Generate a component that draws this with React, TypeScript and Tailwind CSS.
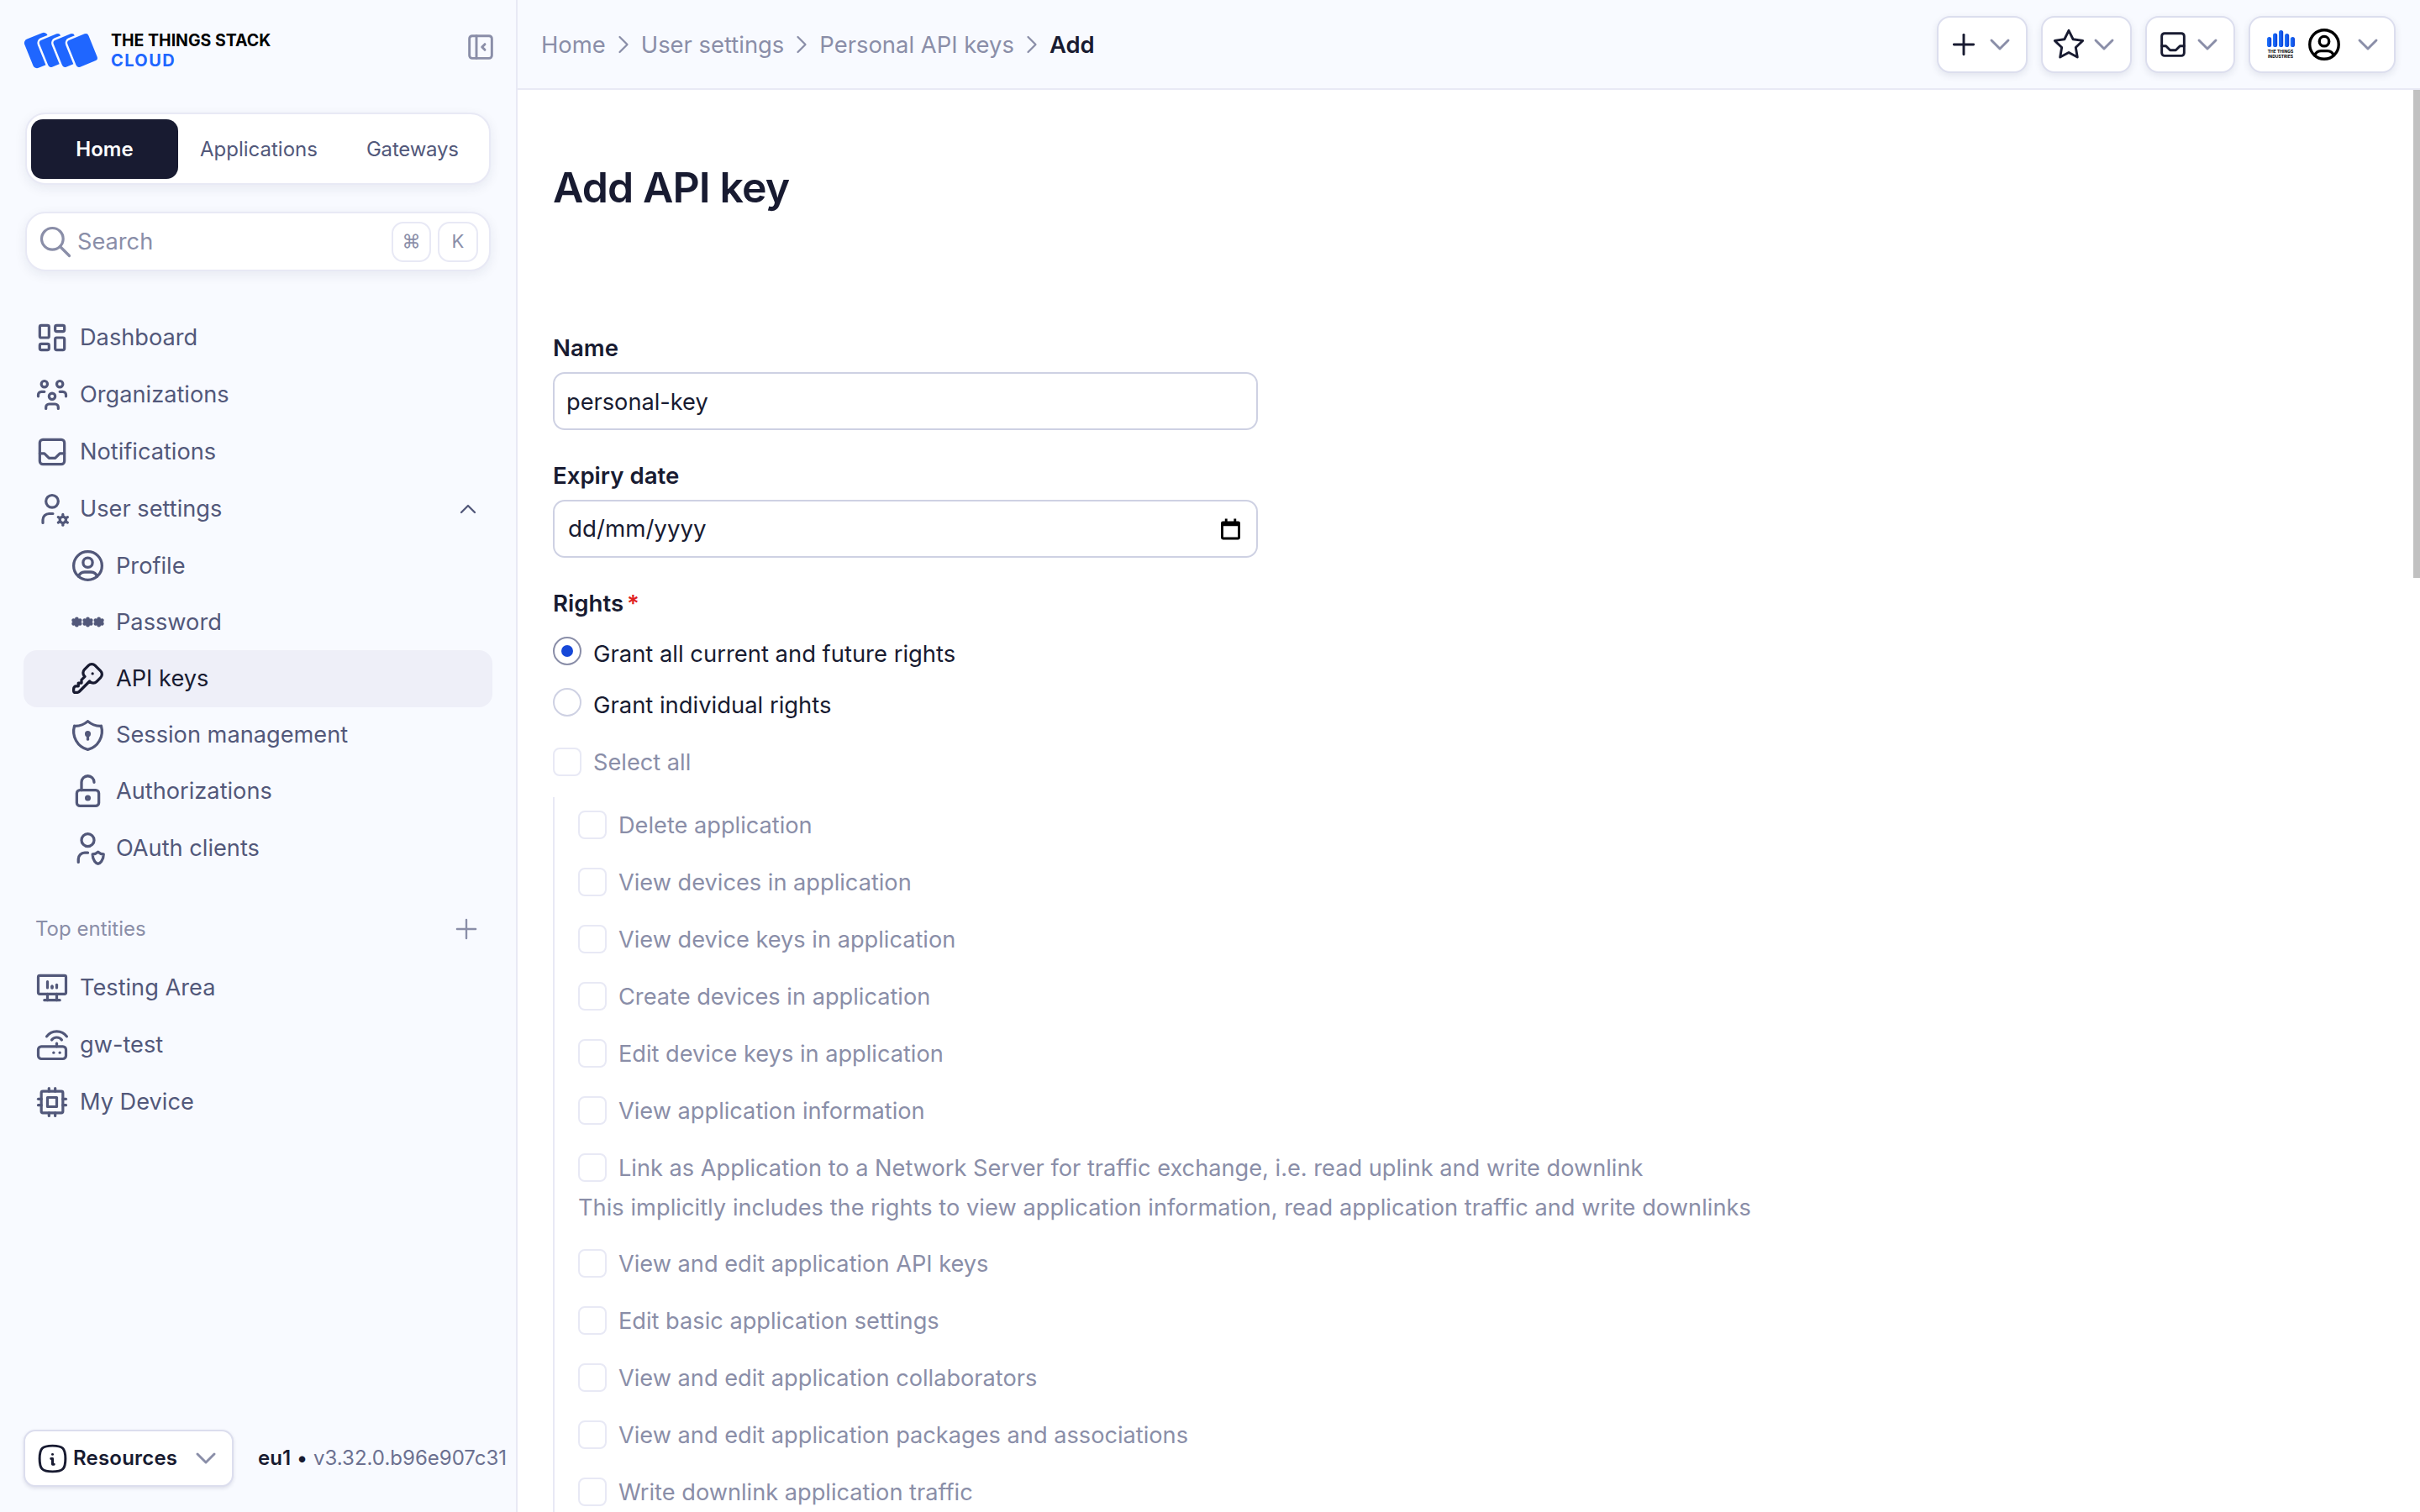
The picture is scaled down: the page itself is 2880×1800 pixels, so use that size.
import React from "react";
import {
  TbLayoutDashboard, TbUsersGroup, TbInbox, TbUserCog, TbChevronUp, TbUserCircle, TbPassword, TbKey,
  TbShieldLock, TbLockOpen, TbUserShield, TbPlus, TbDeviceDesktopAnalytics, TbRouter, TbCpu,
  TbInfoSquareRounded, TbChevronDown, TbSearch, TbLayoutSidebarLeftCollapse, TbChevronRight, TbStar,
} from "react-icons/tb";

function NavRow({ icon: Icon, label, trailing }: { icon: any; label: string; trailing?: React.ReactNode }) {
  return (
    <div className="flex h-[68px] items-center pl-[12px] pr-[6px] text-[27.2px] text-[#52587a]">
      <Icon size={44} strokeWidth={1.75} className="mr-[11px] shrink-0" />
      <span className="pt-[1px]">{label}</span>
      {trailing}
    </div>
  );
}

function SubRow({ icon: Icon, label, active, stroke = 1.75 }: { icon: any; label: string; active?: boolean; stroke?: number }) {
  return (
    <div className={`flex h-[67.2px] items-center rounded-[16px] pl-[54px] text-[27.2px] ${active ? "bg-[#eeeff8] text-[#181b31]" : "text-[#52587a]"}`}>
      <Icon size={45} strokeWidth={stroke} className="mr-[11px] shrink-0" />
      <span className="pt-[1px]">{label}</span>
    </div>
  );
}

function Logo() {
  return (
    <svg width="92" height="46" viewBox="0 0 92 46" className="shrink-0">
      {[20, 36.7, 53.4, 70].map((c, i) => (
        <rect key={c} x={c - 14.75} y="4.5" width="29.5" height="37" rx="5" fill="#1f66ff" stroke="#f8faff" strokeWidth={i === 0 ? 0 : 2.5} transform={`rotate(-22 ${c} 23)`} />
      ))}
    </svg>
  );
}

function Sidebar() {
  return (
    <aside className="flex h-full w-[616px] shrink-0 flex-col border-r-2 border-[#e8e9f5] bg-[#f8faff] pl-[28px] pr-[24px]">
      <div className="flex h-[134px] items-start justify-between pt-[36px]">
        <div className="flex items-center gap-[12px]">
          <Logo />
          <div className="font-bold leading-[24px]">
            <div className="text-[19.5px] tracking-[0px] text-black">THE THINGS STACK</div>
            <div className="text-[20px] tracking-[1.4px] text-[#1f66ff]">CLOUD</div>
          </div>
        </div>
        <TbLayoutSidebarLeftCollapse size={40} strokeWidth={1.75} className="mr-[-2px] text-[#8a8ea8]" />
      </div>

      <div className="ml-[2px] mr-[6px] flex h-[86px] items-center rounded-[24px] border-2 border-[#e8e9f5] bg-white pl-[5px] text-[24px] text-[#52587a] shadow-[0_4px_14px_rgba(30,35,80,0.08)]">
        <div className="flex h-[71px] w-[175px] items-center justify-center rounded-[14px] bg-[#181b31] pt-[1px] font-semibold text-white">Home</div>
        <span className="ml-[26px] pt-[1px]">Applications</span>
        <span className="ml-[58px] pt-[1px] tracking-[-0.2px]">Gateways</span>
      </div>

      <div className="ml-[2px] mr-[6px] mt-[32px] flex h-[71px] items-center rounded-[24px] border-2 border-[#e8e9f5] bg-white pl-[12px] pr-[13px] text-[27.2px] text-[#8a8ea8] shadow-[0_4px_14px_rgba(30,35,80,0.08)]">
        <TbSearch size={44} strokeWidth={1.75} />
        <span className="ml-[4px] pt-[2px]">Search</span>
        <span className="ml-auto flex h-[48px] w-[47px] items-center justify-center rounded-[14px] border-2 border-[#e8e9f5] text-[22px]">⌘</span>
        <span className="ml-[8px] flex h-[48px] w-[48px] items-center justify-center rounded-[14px] border-2 border-[#e8e9f5] text-[22px]">K</span>
      </div>

      <nav className="mr-[4px] mt-[45px]">
        <NavRow icon={TbLayoutDashboard} label="Dashboard" />
        <NavRow icon={TbUsersGroup} label="Organizations" />
        <NavRow icon={TbInbox} label="Notifications" />
        <NavRow icon={TbUserCog} label="User settings" trailing={<TbChevronUp size={32} strokeWidth={1.75} className="ml-auto mr-[7px]" />} />
        <SubRow icon={TbUserCircle} label="Profile" />
        <SubRow icon={TbPassword} label="Password" stroke={2.5} />
        <SubRow icon={TbKey} label="API keys" active />
        <SubRow icon={TbShieldLock} label="Session management" />
        <SubRow icon={TbLockOpen} label="Authorizations" />
        <SubRow icon={TbUserShield} label="OAuth clients" />
      </nav>

      <div className="mt-[43px] flex h-[40px] items-center justify-between pl-[14px] pr-[16px] text-[24px] text-[#8a8ea8]">
        <span>Top entities</span>
        <TbPlus size={38} strokeWidth={1.5} />
      </div>
      <div className="mt-[16px]">
        <NavRow icon={TbDeviceDesktopAnalytics} label="Testing Area" />
        <NavRow icon={TbRouter} label="gw-test" />
        <NavRow icon={TbCpu} label="My Device" />
      </div>

      <div className="mb-[30px] mt-auto flex items-center whitespace-nowrap">
        <div className="flex h-[68px] w-[250px] shrink-0 items-center rounded-[14px] border-2 border-[#dcdeee] bg-white pl-[12px] text-[24px] font-semibold tracking-[0.2px] text-[#181b31] shadow-[0_2px_4px_rgba(30,35,80,0.12)]">
          <TbInfoSquareRounded size={41} strokeWidth={1.75} />
          <span className="ml-[4px]">Resources</span>
          <TbChevronDown size={40} strokeWidth={1.75} className="ml-[14px] text-[#8a8ea8]" />
        </div>
        <div className="ml-[29px] text-[24px] text-[#6b7090]">
          <span className="font-semibold text-[#181b31]">eu1</span>
          <span className="text-[#181b31]"> • </span>v3.32.0.b96e907c31
        </div>
      </div>
    </aside>
  );
}

function HeaderButton({ w, children }: { w: string; children: React.ReactNode }) {
  return (
    <div className={`flex h-[68px] items-center rounded-[16px] border-2 border-[#dcdeee] bg-white shadow-[0_3px_8px_rgba(30,35,80,0.1)] ${w}`}>
      {children}
    </div>
  );
}

const Chev = ({ className = "" }: { className?: string }) => (
  <TbChevronDown size={40} strokeWidth={1.75} className={`text-[#8a8ea8] ${className}`} />
);

function TopBar() {
  const crumbChev = <TbChevronRight size={36} strokeWidth={1.5} className="mx-[3px] text-[#8a8ea8]" />;
  return (
    <header className="flex h-[107px] shrink-0 items-center border-b-2 border-[#e8e9f5] bg-[#f8faff] pl-[28px] pr-[29px]">
      <div className="flex items-center pt-[2px] text-[27.4px] text-[#8a8ea8]">
        <span>Home</span>
        {crumbChev}
        <span>User settings</span>
        {crumbChev}
        <span>Personal API keys</span>
        {crumbChev}
        <span className="font-semibold text-[#181b31]">Add</span>
      </div>
      <div className="ml-auto flex items-center gap-[16px] text-[#181b31]">
        <HeaderButton w="w-[108px] pl-[10px]">
          <TbPlus size={40} strokeWidth={1.75} />
          <Chev className="ml-[3px]" />
        </HeaderButton>
        <HeaderButton w="w-[108px] pl-[11px]">
          <TbStar size={40} strokeWidth={1.75} />
          <Chev className="ml-[2px]" />
        </HeaderButton>
        <HeaderButton w="w-[107px] pl-[11px]">
          <TbInbox size={40} strokeWidth={1.75} />
          <Chev className="ml-[1px]" />
        </HeaderButton>
        <HeaderButton w="w-[175px] pl-[19px]">
          <div className="flex w-[34px] flex-col items-center">
            <svg width="33" height="20" viewBox="0 0 33 20">
              <defs>
                <linearGradient id="tti" x1="0" y1="0" x2="1" y2="0">
                  <stop offset="0" stopColor="#1f78ff" />
                  <stop offset="1" stopColor="#0b3fd8" />
                </linearGradient>
              </defs>
              <rect x="0" y="8" width="5.2" height="12" rx="2.6" fill="url(#tti)" />
              <rect x="7" y="3.5" width="5.2" height="16.5" rx="2.6" fill="url(#tti)" />
              <rect x="14" y="0" width="5.2" height="20" rx="2.6" fill="url(#tti)" />
              <rect x="21" y="4" width="5.2" height="16" rx="2.6" fill="url(#tti)" />
              <rect x="27.8" y="8" width="5.2" height="12" rx="2.6" fill="url(#tti)" />
            </svg>
            <div className="mt-[2px] whitespace-nowrap text-center text-[5px] font-bold leading-[6px] text-black">THE THINGS<br />INDUSTRIES</div>
          </div>
          <TbUserCircle size={46} strokeWidth={1.75} className="ml-[12px] text-black" />
          <Chev className="ml-[9px]" />
        </HeaderButton>
      </div>
    </header>
  );
}

function Check({ label }: { label: string }) {
  return (
    <div className="flex h-[68px] items-center">
      <span className="mb-[2px] h-[34px] w-[34px] shrink-0 rounded-[8px] border-2 border-[#e8e9f5] bg-white" />
      <span className="ml-[14px] text-[27.2px] text-[#8a8ea8]">{label}</span>
    </div>
  );
}

function Radio({ checked, label }: { checked?: boolean; label: string }) {
  return (
    <div className="flex h-[61px] items-center">
      <span className={`mb-[5px] flex h-[34px] w-[34px] shrink-0 items-center justify-center rounded-full border-2 bg-white ${checked ? "border-[#8a8ea8]" : "border-[#ced1e3]"}`}>
        {checked && <span className="h-[14px] w-[14px] rounded-full bg-[#1648d8]" />}
      </span>
      <span className="ml-[14px] pt-[3px] text-[27.4px] text-[#181b31]">{label}</span>
    </div>
  );
}

function Form() {
  return (
    <div className="relative flex-1 overflow-hidden bg-white pl-[42px]">
      <h1 className="pt-[85px] text-[50px] font-semibold leading-[62px] tracking-[-0.9px] text-[#181b31]">Add API key</h1>

      <label className="mt-[139px] block text-[27.6px] font-semibold leading-[42px] text-[#181b31]">Name</label>
      <input
        readOnly
        value="personal-key"
        className="mt-[8px] block h-[69px] w-[839px] rounded-[14px] border-2 border-[#ced1e3] bg-white px-[14px] pt-[1px] text-[27.2px] text-[#181b31] outline-none"
      />

      <label className="mt-[33px] block text-[27.6px] font-semibold leading-[42px] text-[#181b31]">Expiry date</label>
      <div className="mt-[8px] flex h-[69px] w-[839px] items-center rounded-[14px] border-2 border-[#ced1e3] bg-white pl-[16px] pr-[19px] text-[27.7px] text-[#181b31]">
        <span className="pt-[1px]">dd/mm/yyyy</span>
        <svg width="23" height="26" viewBox="0 0 24 26" className="ml-auto">
          <path d="M5 0h3v3h8V0h3v3h2.5A2.5 2.5 0 0 1 24 5.500V23.500A2.500 2.500 0 0 1 21.500 26H2.500A2.500 2.500 0 0 1 0 23.500V5.500A2.500 2.500 0 0 1 2.500 3H5zM3 9v14h18V9z" fill="#000" />
        </svg>
      </div>

      <div className="mt-[33px] text-[27.6px] font-semibold leading-[42px] text-[#181b31]">
        Rights<span className="ml-[4px] text-[#e02020]">*</span>
      </div>
      <div className="mt-[8px]">
        <Radio checked label="Grant all current and future rights" />
        <Radio label="Grant individual rights" />
      </div>
      <div className="mt-[5px] flex h-[68px] items-center">
        <span className="mb-[2px] h-[34px] w-[34px] shrink-0 rounded-[8px] border-2 border-[#e8e9f5] bg-white" />
        <span className="ml-[14px] text-[27.2px] text-[#8a8ea8]">Select all</span>
      </div>

      <div className="mt-[7px] border-l-2 border-[#e8e9f5] pl-[28px]">
        <Check label="Delete application" />
        <Check label="View devices in application" />
        <Check label="View device keys in application" />
        <Check label="Create devices in application" />
        <Check label="Edit device keys in application" />
        <Check label="View application information" />
        <Check label="Link as Application to a Network Server for traffic exchange, i.e. read uplink and write downlink" />
        <div className="mt-[-8px] pb-[12px] text-[27.2px] leading-[42px] tracking-[0.05px] text-[#8a8ea8]">This implicitly includes the rights to view application information, read application traffic and write downlinks</div>
        <Check label="View and edit application API keys" />
        <Check label="Edit basic application settings" />
        <Check label="View and edit application collaborators" />
        <Check label="View and edit application packages and associations" />
        <Check label="Write downlink application traffic" />
      </div>

      <div className="absolute right-0 top-0 h-[581px] w-[8px] bg-[#c1c1c1]" />
    </div>
  );
}

export default function App() {
  return (
    <div className="flex h-[1800px] w-[2880px] overflow-hidden bg-white [font-family:Inter,sans-serif]">
      <Sidebar />
      <main className="flex h-full min-w-0 flex-1 flex-col">
        <TopBar />
        <Form />
      </main>
    </div>
  );
}
